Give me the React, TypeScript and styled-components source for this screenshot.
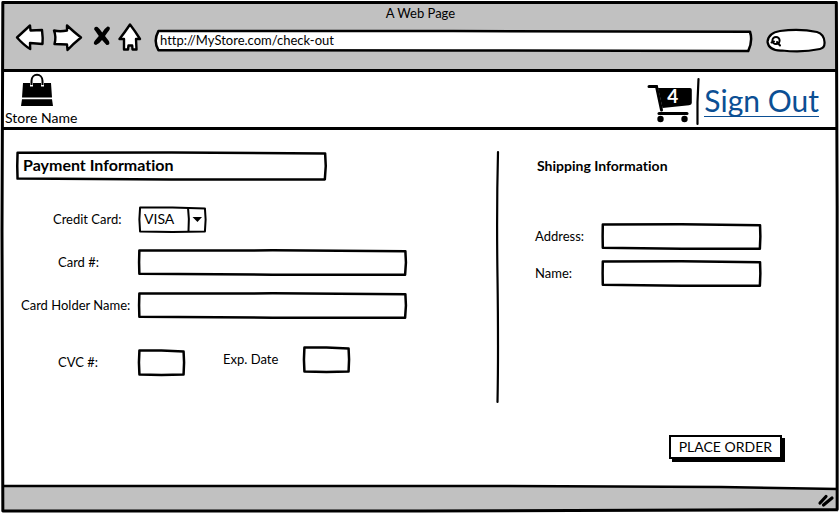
import React from "react";
import styled, { createGlobalStyle } from "styled-components";

const ink = "#000";
const chrome = "#c1c1c1";

const GlobalStyle = createGlobalStyle`
  *, *::before, *::after { box-sizing: border-box; }
  body { margin: 0; background: #fff; }
  body, input, select, button {
    font-family: Lato, "Liberation Sans", sans-serif;
    font-size: 13px;
    line-height: 18px;
    font-variant-ligatures: none;
    color: ${ink};
  }
`;

/* Hand-drawn outline that stretches over its parent */
const OutlineSvg = styled.svg<{ $fill: string }>`
  position: absolute;
  inset: 0;
  width: 100%;
  height: 100%;
  overflow: visible;
  pointer-events: none;
  fill: ${(p) => p.$fill};
  stroke: ${ink};
  stroke-linejoin: round;
  stroke-linecap: round;

  path {
    vector-effect: non-scaling-stroke;
  }
`;

const shapes = {
  field: "M0.5 6 L50 5 L99.4 8 L99.6 50 L99.3 95 L50 95 L0.5 92 L0.4 50 Z",
  small: "M3 6 L50 6 L97 9 L98 50 L97 94 L50 96 L3 94 L2 50 Z",
  url: "M0.9 5 L50 5 L99.5 8 Q100 50 99.2 96 L50 93 L0.9 92 Q0 50 0.9 5 Z",
  frame: "M0.1 0.1 L50 0.1 L99.8 0.1 L99.9 40 L99.9 99.5 L50 99.8 L0.1 99.8 L0 45 Z",
};

function Outline({
  shape,
  weight = 2,
  fill = "none",
}: {
  shape: keyof typeof shapes;
  weight?: number;
  fill?: string;
}) {
  return (
    <OutlineSvg $fill={fill} viewBox="0 0 100 100" preserveAspectRatio="none" aria-hidden="true">
      <path d={shapes[shape]} strokeWidth={weight} />
    </OutlineSvg>
  );
}

const Page = styled.div`
  min-height: 100vh;
  padding: 2px 1px 2px 2px;
  display: flex;
`;

const Window = styled.div`
  position: relative;
  flex: 1;
  display: flex;
  flex-direction: column;
`;

const Toolbar = styled.header`
  background: ${chrome};
  border-bottom: 3px solid ${ink};
  padding: 1px 12px 15px 13px;
`;

const WindowTitle = styled.div`
  text-align: center;
  line-height: 20px;
`;

const ToolRow = styled.div`
  display: flex;
  align-items: flex-start;
`;

const NavButtons = styled.nav`
  display: flex;
  width: 138px;
`;

const IconButton = styled.button`
  display: block;
  padding: 0;
  border: 0;
  background: none;
  cursor: pointer;
`;

const Icon = styled.svg`
  display: block;
  overflow: visible;
`;

const Address = styled.label`
  position: relative;
  flex: 1;
  height: 22px;
  margin: 7px 13px 0 0;
`;

const UrlInput = styled.input`
  position: relative;
  display: block;
  width: 100%;
  height: 20px;
  padding: 0 7px;
  border: 0;
  background: transparent;
`;

const Search = styled.label`
  position: relative;
  width: 60px;
  height: 26px;
  margin-top: 5px;
`;

const SearchInput = styled.input`
  position: relative;
  display: block;
  width: 100%;
  height: 26px;
  padding: 0 8px 0 20px;
  border: 0;
  background: transparent;
`;

const SearchArt = styled.svg`
  position: absolute;
  inset: 0;
  pointer-events: none;
`;

const StoreBar = styled.div`
  display: flex;
  justify-content: space-between;
  align-items: flex-start;
  height: 58px;
  padding: 0 19px 0 3px;
  border-bottom: 3px solid ${ink};
`;

const Store = styled.a`
  display: flex;
  flex-direction: column;
  padding-top: 2px;
  font-size: 14px;
  color: ${ink};
  text-decoration: none;
  gap: 2px;
`;

const StoreMark = styled.span`
  padding-left: 16px;
`;

const Account = styled.div`
  display: flex;
  align-items: flex-start;
  padding-top: 6px;
`;

const Cart = styled.a`
  position: relative;
  display: block;
  padding-top: 6px;
`;

const CartCount = styled.span`
  position: absolute;
  left: 20px;
  top: 9px;
  font-size: 19px;
  font-weight: 700;
  line-height: 18px;
  color: #fff;
`;

const SignOut = styled.a`
  margin-top: 6px;
  font-size: 30px;
  line-height: 32px;
  color: #0b4f94;
  text-decoration: none;
  border-bottom: 1px solid #0b4f94;
`;

const Content = styled.main`
  flex: 1;
  display: grid;
  grid-template-columns: 494px auto minmax(260px, 1fr);
  grid-template-rows: auto 1fr;
  padding-top: 21px;
`;

const Pane = styled.section<{ $shipping?: boolean }>`
  padding-left: ${(p) => (p.$shipping ? 35 : 14)}px;
`;

const PaymentTitle = styled.h2`
  position: relative;
  width: 311px;
  height: 30px;
  margin: 0 0 25px;
  padding: 0 7px;
  font-size: 16px;
  line-height: 28px;
`;

const ShippingTitle = styled.h2`
  margin: 6px 0 48px;
  padding-left: 2px;
  font-size: 14px;
  line-height: 18px;
`;

const Row = styled.div<{ $gap?: number }>`
  display: flex;
  align-items: center;
  margin-bottom: ${(p) => p.$gap ?? 16}px;
`;

const Label = styled.label<{ $width: number; $indent?: number }>`
  flex: none;
  width: ${(p) => p.$width}px;
  padding-left: ${(p) => p.$indent ?? 0}px;
  padding-bottom: 2px;
  white-space: nowrap;
`;

const CardCodes = styled.div`
  display: flex;
  align-items: flex-start;
`;

const CodeGroup = styled.div<{ $drop?: number }>`
  display: flex;
  align-items: center;
  padding-top: ${(p) => p.$drop ?? 0}px;
`;

const FieldBox = styled.span<{ $width: number }>`
  position: relative;
  display: block;
  width: ${(p) => p.$width}px;
  height: 27px;
`;

const FieldInput = styled.input`
  display: block;
  width: 100%;
  height: 27px;
  padding: 0 7px;
  border: 0;
  background: transparent;
`;

const FieldSelect = styled.select`
  display: block;
  width: 100%;
  height: 27px;
  padding: 0 20px 2px 6px;
  border: 0;
  background: transparent;
  font-size: 14px;
  appearance: none;
`;

const SelectArrow = styled.svg`
  position: absolute;
  top: 0;
  right: 0;
  pointer-events: none;
`;

const Actions = styled.div`
  grid-column: 1 / -1;
  display: flex;
  justify-content: flex-end;
  align-items: flex-start;
  padding: 31px 56px 24px;
`;

const OrderButton = styled.button`
  height: 24px;
  padding: 0 8px 1px;
  border: 2px solid ${ink};
  background: #fff;
  box-shadow: 3px 3px 0 ${ink};
  font-size: 14px;
  cursor: pointer;
`;

const Footer = styled.footer`
  position: relative;
  display: flex;
  justify-content: flex-end;
  height: 26px;
  padding: 8px 4px 0;
`;

const FooterArt = styled.svg`
  position: absolute;
  inset: 0;
  width: 100%;
  height: 100%;
  overflow: visible;

  path {
    vector-effect: non-scaling-stroke;
  }
`;

const Grip = styled(Icon)`
  position: relative;
`;

function Field({ id, width, small }: { id: string; width: number; small?: boolean }) {
  return (
    <FieldBox $width={width}>
      <FieldInput id={id} type="text" />
      <Outline shape={small ? "small" : "field"} weight={2.5} />
    </FieldBox>
  );
}

export default function App() {
  return (
    <>
      <GlobalStyle />
      <Page>
        <Window>
          <Toolbar>
            <WindowTitle>A Web Page</WindowTitle>
            <ToolRow>
              <NavButtons aria-label="Browser">
                <IconButton aria-label="Back">
                  <Icon width="37" height="28" viewBox="0 0 37 28" fill="#fff" stroke={ink} strokeWidth="2.4" strokeLinejoin="round">
                    <path d="M2 14.5 L15 2.5 L15.5 7.5 L27 7 C27.5 11 28 16 27.5 21 L15 20 L15.2 26 C10 23 6 19 2 14.5 Z" />
                  </Icon>
                </IconButton>
                <IconButton aria-label="Forward">
                  <Icon width="41" height="28" viewBox="0 0 41 28" fill="#fff" stroke={ink} strokeWidth="2.4" strokeLinejoin="round">
                    <path d="M2 7.5 Q8 9 15 7.5 L15 2.5 Q22 9 29 14.5 Q21 21 15.5 27 L15 21.5 L2.5 21 Q4.5 14 2 7.5 Z" />
                  </Icon>
                </IconButton>
                <IconButton aria-label="Stop">
                  <Icon width="24" height="28" viewBox="0 0 24 28" fill={ink}>
                    <path d="M1.2 6.5 Q1 3.2 4.5 4 Q7 6 9.2 9.6 Q11 6 14.5 3.6 Q18 4 16.4 7 Q14 10 12 13 L16 18.3 Q17.5 22.4 13.5 22 L9 17 Q6 21 3 22 Q-.5 21.4 1.6 18 L5.8 13 Q3.2 9 1.2 6.5 Z" />
                  </Icon>
                </IconButton>
                <IconButton aria-label="Home">
                  <Icon width="28" height="28" viewBox="0 0 28 28" fill="#fff" stroke={ink} strokeWidth="2.4" strokeLinejoin="round">
                    <path d="M13 1.5 Q18 8 23 16 L19 16 L19.5 26.5 L15.5 26.5 L15.2 22.5 L11.5 22.5 L11 26.5 L7 26.5 L7 16 L2.5 16 Q8 9 13 1.5 Z" />
                  </Icon>
                </IconButton>
              </NavButtons>
              <Address>
                <Outline shape="url" weight={2.5} fill="#fff" />
                <UrlInput type="text" aria-label="Address bar" defaultValue="http://MyStore.com/check-out" />
              </Address>
              <Search>
                <SearchArt width="60" height="26" viewBox="0 0 60 26" fill="none" stroke={ink} strokeWidth="2.2" strokeLinecap="round" aria-hidden="true">
                  <path d="M14 3 Q34 .5 51 4 Q58 6 58.5 14 Q59 20 54 21 Q36 25 16 22.5 Q3 23 1.5 14 Q2 5 14 3 Z" fill="#fff" />
                  <circle cx="10" cy="12.5" r="3.6" strokeWidth="2" />
                  <path d="M5.5 14.5 L8 13.5 M11 14 L14 17.5" strokeWidth="2" />
                </SearchArt>
                <SearchInput type="text" aria-label="Search the web" />
              </Search>
            </ToolRow>
          </Toolbar>

          <StoreBar>
            <Store href="#store">
              <StoreMark>
                <Icon width="32" height="33" viewBox="0 0 32 33" aria-hidden="true">
                  <path d="M2 9 H9 V12.5 H12 V9 H20 V12.5 H23 V9 H30 L31 23.5 H1 Z M1 25.2 H31 L32 32 H0 Z" fill={ink} />
                  <path d="M10.5 11 V7 C10.5 -1.2 21.5 -1.2 21.5 7 V11" fill="none" stroke={ink} strokeWidth="2" />
                </Icon>
              </StoreMark>
              Store Name
            </Store>
            <Account>
              <Cart href="#cart" aria-label="Cart, 4 items">
                <Icon width="46" height="40" viewBox="0 0 46 40" aria-hidden="true">
                  <path d="M2 2.5 H9.5 L14.5 26" fill="none" stroke={ink} strokeWidth="3" strokeLinecap="round" />
                  <path d="M11 4 H43 Q45 4 44.8 6 V19 Q44.8 21 42 21.3 L15.5 24 Z" fill={ink} />
                  <path d="M12 29.5 H40" stroke={ink} strokeWidth="3" strokeLinecap="round" />
                  <circle cx="13.5" cy="35" r="3.2" fill={ink} />
                  <circle cx="37.5" cy="35" r="3.2" fill={ink} />
                </Icon>
                <CartCount>4</CartCount>
              </Cart>
              <Icon width="11" height="48" viewBox="0 0 11 48" fill="none" stroke={ink} strokeWidth="2.2" strokeLinecap="round" aria-hidden="true">
                <path d="M5.5 1 Q4 24 4.5 46" />
              </Icon>
              <SignOut href="#sign-out">Sign Out</SignOut>
            </Account>
          </StoreBar>

          <Content>
            <Pane>
              <PaymentTitle>
                Payment Information
                <Outline shape="field" weight={2.5} />
              </PaymentTitle>
              <Row>
                <Label htmlFor="card-type" $width={122} $indent={37}>Credit Card:</Label>
                <FieldBox $width={69}>
                  <FieldSelect id="card-type" defaultValue="VISA">
                    <option>VISA</option>
                  </FieldSelect>
                  <Outline shape="small" weight={2} />
                  <SelectArrow width="20" height="27" viewBox="0 0 20 27" aria-hidden="true">
                    <path d="M1 1.5 Q2.5 13 1.5 25" fill="none" stroke={ink} strokeWidth="2" />
                    <path d="M5.5 11 H15 L10.5 16 Z" fill={ink} />
                  </SelectArrow>
                </FieldBox>
              </Row>
              <Row>
                <Label htmlFor="card-number" $width={122} $indent={42}>Card #:</Label>
                <Field id="card-number" width={269} />
              </Row>
              <Row $gap={27}>
                <Label htmlFor="card-holder" $width={122} $indent={5}>Card Holder Name:</Label>
                <Field id="card-holder" width={269} />
              </Row>
              <CardCodes>
                <CodeGroup $drop={3}>
                  <Label htmlFor="cvc" $width={122} $indent={42}>CVC #:</Label>
                  <Field id="cvc" width={47} small />
                </CodeGroup>
                <CodeGroup>
                  <Label htmlFor="expiry" $width={118} $indent={38}>Exp. Date</Label>
                  <Field id="expiry" width={47} small />
                </CodeGroup>
              </CardCodes>
            </Pane>

            <Icon width="4" height="253" viewBox="0 0 4 253" fill="none" stroke={ink} strokeWidth="2.2" strokeLinecap="round" aria-hidden="true">
              <path d="M2 1 Q.5 60 1.5 126 Q2.5 200 1.5 251" />
            </Icon>

            <Pane $shipping>
              <ShippingTitle>Shipping Information</ShippingTitle>
              <Row $gap={10}>
                <Label htmlFor="address" $width={67}>Address:</Label>
                <Field id="address" width={159} />
              </Row>
              <Row>
                <Label htmlFor="name" $width={67}>Name:</Label>
                <Field id="name" width={159} />
              </Row>
            </Pane>

            <Actions>
              <OrderButton>PLACE ORDER</OrderButton>
            </Actions>
          </Content>

          <Footer>
            <FooterArt viewBox="0 0 100 26" preserveAspectRatio="none" aria-hidden="true">
              <path d="M0 0 L60 0 L86 1 L100 3 V26 H0 Z" fill={chrome} />
              <path d="M0 0 L60 0 L86 1 L100 3" fill="none" stroke={ink} strokeWidth="2.6" />
            </FooterArt>
            <Grip width="16" height="14" viewBox="0 0 16 14" fill="none" stroke={ink} strokeWidth="3.2" strokeLinecap="round" aria-hidden="true">
              <path d="M2 9 L8 2.5 M5.5 11 L14 4" />
            </Grip>
          </Footer>
          <Outline shape="frame" weight={3} />
        </Window>
      </Page>
    </>
  );
}
